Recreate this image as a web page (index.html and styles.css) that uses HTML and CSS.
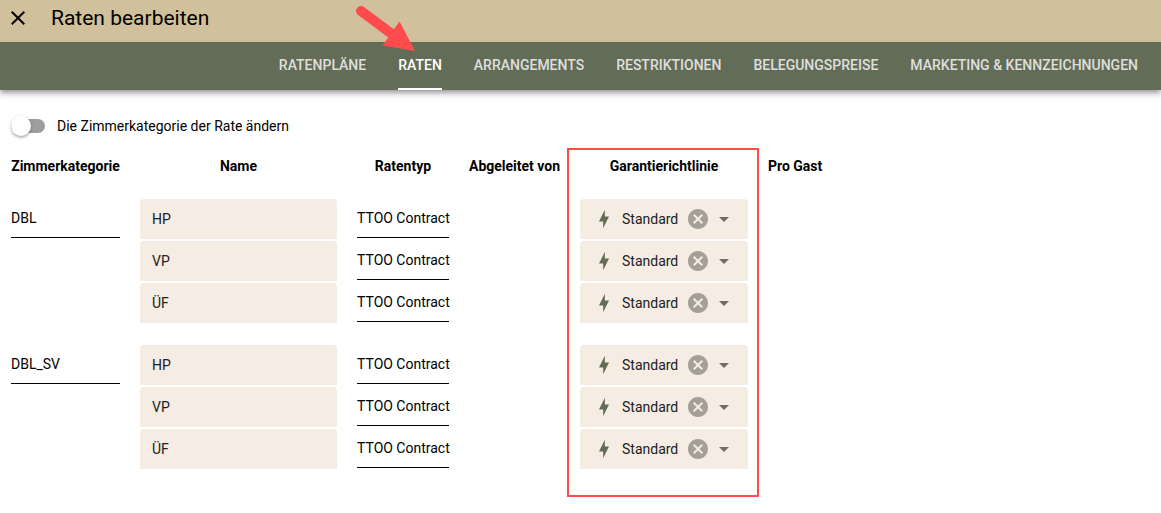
FILE: index.html
```html
<!DOCTYPE html>
<html lang="de">
<head>
    <meta charset="UTF-8" />
    <meta name="viewport" content="width=device-width, initial-scale=1.0"/>
    <title>Raten bearbeiten</title>
    <link rel="stylesheet" href="styles.css">
</head>
<body>
<!-- Icons -->
<svg class="sprite" aria-hidden="true">
    <symbol id="icon-close" viewBox="0 0 24 24">
        <path d="M19 6.41L17.59 5 12 10.59 6.41 5 5 6.41 10.59 12 5 17.59 6.41 19 12 13.41 17.59 19 19 17.59 13.41 12z"/>
    </symbol>
    <symbol id="icon-bolt" viewBox="5 0 14 24">
        <path d="M11 15H6L13 1V9H18L11 23V15Z"/>
    </symbol>
    <symbol id="icon-cancel" viewBox="2 2 20 20">
        <path d="M12 2C6.47 2 2 6.47 2 12s4.47 10 10 10 10-4.47 10-10S17.53 2 12 2zm5 13.59L15.59 17 12 13.41 8.41 17 7 15.59 10.59 12 7 8.41 8.41 7 12 10.59 15.59 7 17 8.41 13.41 12 17 15.59z"/>
    </symbol>
    <symbol id="icon-arrow" viewBox="0 0 10 5">
        <path d="M0 0h10L5 5z"/>
    </symbol>
</svg>

<header class="toolbar">
    <button type="button" class="close" aria-label="Schließen"><svg><use href="#icon-close"/></svg></button>
    <h1>Raten bearbeiten</h1>
</header>

<nav class="tabs">
    <a class="tab" href="#ratenplaene">RATENPLÄNE</a>
    <a class="tab active" href="#raten">RATEN
        <svg class="pointer" viewBox="0 0 62 50" aria-hidden="true">
            <path d="M6 7L37 30" fill="none" stroke="#ff4b4b" stroke-width="10" stroke-linecap="round"/>
            <path d="M60 47L44.500 17.500L27.500 41.500z" fill="#ff4b4b"/>
        </svg>
    </a>
    <a class="tab" href="#arrangements">ARRANGEMENTS</a>
    <a class="tab" href="#restriktionen">RESTRIKTIONEN</a>
    <a class="tab" href="#belegungspreise">BELEGUNGSPREISE</a>
    <a class="tab" href="#marketing">MARKETING &amp; KENNZEICHNUNGEN</a>
</nav>

<main>
    <label class="toggle">
        <input type="checkbox" role="switch">
        <span>Die Zimmerkategorie der Rate ändern</span>
    </label>

    <table class="rates">
        <thead>
        <tr>
            <th class="col-category">Zimmerkategorie</th>
            <th class="col-name">Name</th>
            <th class="col-type">Ratentyp</th>
            <th class="col-derived">Abgeleitet von</th>
            <th class="col-policy">Garantierichtlinie<span class="marker"></span></th>
            <th class="col-guest">Pro Gast</th>
        </tr>
        </thead>
    </table>
</main>

<script>
    const groups = [
        { category: 'DBL', rates: ['HP', 'VP', 'ÜF'] },
        { category: 'DBL_SV', rates: ['HP', 'VP', 'ÜF'] }
    ];

    const table = document.querySelector('.rates');

    groups.forEach((group) => {
        const body = document.createElement('tbody');
        body.innerHTML = group.rates.map((rate, i) => `
          <tr>
            <td>${i === 0 ? `<div class="static">${group.category}</div>` : ''}</td>
            <td><input class="name" type="text" value="${rate}" aria-label="Name ${group.category} ${rate}"></td>
            <td><div class="static">TTOO Contract</div></td>
            <td></td>
            <td>
              <div class="policy">
                <svg class="bolt"><use href="#icon-bolt"/></svg>
                <select aria-label="Garantierichtlinie ${group.category} ${rate}"><option>Standard</option></select>
                <button type="button" class="clear" aria-label="Entfernen"><svg><use href="#icon-cancel"/></svg></button>
                <svg class="arrow"><use href="#icon-arrow"/></svg>
              </div>
            </td>
            <td></td>
          </tr>
        `).join('');
        table.appendChild(body);
    });
</script>
</body>
</html>
```
FILE: styles.css
```css
* {
    box-sizing: border-box;
}
body {
    margin: 0;
    background: #fff;
    color: #000;
    font-family: Roboto, "Liberation Sans", sans-serif;
    font-size: 14px;
    line-height: 20px;
}
svg {
    display: block;
    fill: currentColor;
}
button {
    padding: 0;
    border: none;
    background: none;
    color: inherit;
    cursor: pointer;
}
.sprite {
    display: none;
}
.toolbar {
    display: flex;
    align-items: center;
    height: 42px;
    padding: 0 6px 6px;
    background: #d0c09c;
}
.close svg {
    width: 24px;
    height: 24px;
}
.toolbar h1 {
    margin: 0 0 0 21px;
    font-size: 21px;
    font-weight: 400;
    line-height: 28px;
}
.tabs {
    display: flex;
    justify-content: flex-end;
    height: 48px;
    padding-right: 7px;
    background: #636c57;
    box-shadow: 0 3px 4px -1px rgba(0, 0, 0, .2), 0 4px 6px rgba(0, 0, 0, .24);
}
.tab {
    position: relative;
    margin: 0 16px;
    color: rgba(255, 255, 255, .8);
    font-weight: 500;
    line-height: 46px;
    white-space: nowrap;
    text-decoration: none;
}
.tab.active {
    border-bottom: 2px solid #fff;
    color: #fff;
}
.pointer {
    position: absolute;
    top: -38px;
    left: -43px;
    width: 62px;
    height: 50px;
}
main {
    padding: 26px 1px;
}
.toggle {
    display: flex;
    align-items: center;
    gap: 12px;
    width: max-content;
    margin: 0 10px 17px;
}
.toggle input {
    position: relative;
    width: 34px;
    height: 14px;
    margin: 0;
    border-radius: 7px;
    background: #9e9e9e;
    appearance: none;
}
/* Schalterknopf */
.toggle input::before {
    content: "";
    position: absolute;
    top: -3px;
    left: 0;
    width: 20px;
    height: 20px;
    border-radius: 50%;
    background: #fff;
    box-shadow: 0 2px 2px rgba(0, 0, 0, .2), 0 1px 4px rgba(0, 0, 0, .16);
}
.toggle input:checked::before {
    left: 14px;
}
.rates {
    width: 831px;
    border-spacing: 0;
    table-layout: fixed;
}
.rates th {
    height: 26px;
    padding: 0 10px;
    white-space: nowrap;
}
.rates td {
    padding: 0 10px 2px;
    vertical-align: top;
    white-space: nowrap;
}
.rates tbody tr:first-child td {
    padding-top: 20px;
}
.col-category {
    width: 129px;
}
.col-name {
    width: 217px;
}
.col-type {
    width: 112px;
}
.col-derived {
    width: 111px;
}
.col-policy {
    position: relative;
    width: 188px;
}
.col-guest {
    width: 74px;
}
.marker {
    position: absolute;
    top: -5px;
    left: -3px;
    right: -1px;
    height: 349px;
    border: 2px solid #ff4b4b;
    pointer-events: none;
}
.static {
    height: 39px;
    border-bottom: 1px solid #000;
    line-height: 38px;
}
.name,
.policy {
    width: 100%;
    height: 40px;
    border: none;
    border-radius: 4px 4px 0 0;
    background: #f5ece3;
    color: #212121;
}
.name {
    display: block;
    padding: 0 12px;
    font: inherit;
}
.policy {
    display: flex;
    align-items: center;
    padding: 0 18px;
}
.policy select {
    width: 58px;
    margin: 0 8px 0 12px;
    padding: 0;
    border: none;
    background: none;
    color: inherit;
    font: inherit;
    appearance: none;
}
.bolt {
    width: 12px;
    height: 20px;
    color: #636c57;
}
.clear,
.arrow {
    flex-shrink: 0;
    color: #716c68;
}
.clear {
    opacity: .6;
}
.clear svg {
    width: 20px;
    height: 20px;
}
.arrow {
    width: 10px;
    height: 5px;
    margin-left: 11px;
}
```
